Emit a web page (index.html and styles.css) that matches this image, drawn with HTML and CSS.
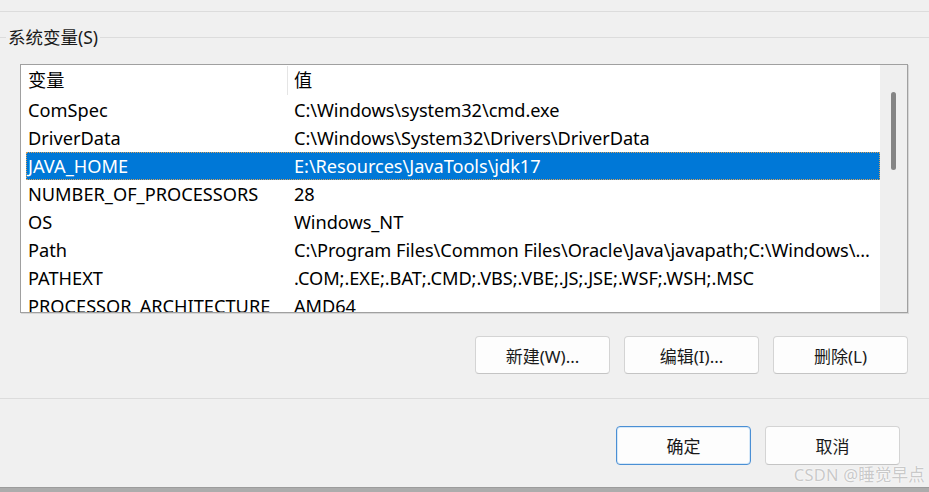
FILE: index.html
```html
<!DOCTYPE html>
<html lang="zh-CN">
<head>
    <meta charset="UTF-8">
    <title>环境变量</title>
    <link rel="stylesheet" href="styles.css">
</head>
<body>
<div class="window">
    <div class="top-strip"></div>
    <fieldset class="group">
        <legend>系统变量(S)</legend>
        <div class="group-body">
            <div class="list-box">
                <div class="list-view">
                    <div class="list-head">
                        <div class="col-name">变量</div>
                        <div class="col-value">值</div>
                    </div>
                    <div class="row"><div class="col-name">ComSpec</div><div class="col-value">C:\Windows\system32\cmd.exe</div></div>
                    <div class="row"><div class="col-name">DriverData</div><div class="col-value">C:\Windows\System32\Drivers\DriverData</div></div>
                    <div class="row selected"><div class="col-name">JAVA_HOME</div><div class="col-value">E:\Resources\JavaTools\jdk17</div></div>
                    <div class="row"><div class="col-name">NUMBER_OF_PROCESSORS</div><div class="col-value">28</div></div>
                    <div class="row"><div class="col-name">OS</div><div class="col-value">Windows_NT</div></div>
                    <div class="row"><div class="col-name">Path</div><div class="col-value">C:\Program Files\Common Files\Oracle\Java\javapath;C:\Windows\...</div></div>
                    <div class="row"><div class="col-name">PATHEXT</div><div class="col-value">.COM;.EXE;.BAT;.CMD;.VBS;.VBE;.JS;.JSE;.WSF;.WSH;.MSC</div></div>
                    <div class="row"><div class="col-name">PROCESSOR_ARCHITECTURE</div><div class="col-value">AMD64</div></div>
                </div>
                <div class="scrollbar">
                    <div class="thumb"></div>
                </div>
            </div>
            <div class="list-buttons">
                <button class="btn">新建(W)...</button>
                <button class="btn">编辑(I)...</button>
                <button class="btn">删除(L)</button>
            </div>
        </div>
    </fieldset>
    <div class="dialog-buttons">
        <button class="btn btn-default">确定</button>
        <button class="btn">取消</button>
    </div>
    <div class="watermark">CSDN @睡觉早点</div>
    <div class="bottom-bar"></div>
</div>
</body>
</html>
```

FILE: styles.css
```css
* {
    box-sizing: border-box;
}
body {
    margin: 0;
    background-color: #f0f0f0;
    font-family: "Noto Sans", "Noto Sans CJK SC", sans-serif;
    color: #000;
    overflow: hidden;
}
.window {
    position: relative;
    width: 929px;
    height: 492px;
    overflow: hidden;
}
.top-strip {
    height: 12px;
    border-bottom: 1px solid #dcdcdc;
}
.group {
    margin: 14px -2px 0 -2px;
    padding: 16px 0 24px 0;
    border: 1px solid #dcdcdc;
    min-width: 0;
}
.group legend {
    margin-left: 7px;
    padding: 0 2px;
    font-size: 17.5px;
    line-height: 22px;
    color: #1a1a1a;
}
.group-body {
    padding: 0 22px 0 21px;
}
.list-box {
    display: flex;
    height: 249px;
    border: 1px solid #a0a0a0;
    background-color: #fff;
    box-shadow: 1px 1px 0 #d6d6d6;
}
.list-view {
    flex: 1;
    overflow: hidden;
    font-size: 18.2px;
}
.list-head {
    display: flex;
    height: 31px;
    align-items: center;
    padding-left: 6px;
}
.list-head .col-name {
    width: 261px;
    height: 29px;
    line-height: 29px;
    padding-left: 1px;
    border-right: 1px solid #e5e5e5;
    white-space: nowrap;
}
.list-head .col-value {
    padding-left: 6px;
    line-height: 29px;
}
.row {
    display: flex;
    height: 28px;
    line-height: 28px;
    margin-left: 5px;
}
.row .col-name {
    width: 264px;
    padding-left: 2px;
    white-space: nowrap;
    overflow: hidden;
}
.row .col-value {
    flex: 1;
    padding-left: 4px;
    white-space: nowrap;
    overflow: hidden;
    letter-spacing: -0.05px;
}
.row.selected {
    background-color: #0078d7;
    color: #fff;
    outline: 1px dotted #d9a15a;
    outline-offset: -1px;
}
.scrollbar {
    width: 27px;
    background-color: #efefef;
    position: relative;
}
.thumb {
    position: absolute;
    left: 11px;
    top: 27px;
    width: 5px;
    height: 78px;
    border-radius: 3px;
    background-color: #858585;
}
.list-buttons {
    display: flex;
    justify-content: flex-end;
    gap: 14px;
    margin-top: 23px;
}
.btn {
    width: 135px;
    height: 38px;
    font-family: "Noto Sans", "Noto Sans CJK SC", sans-serif;
    font-size: 17px;
    color: #1a1a1a;
    background-color: #fdfdfd;
    border: 1px solid #d4d4d4;
    border-bottom-color: #c4c4c4;
    border-radius: 4px;
    padding: 0;
}
.btn-default {
    border: 1px solid #4a8fd4;
    box-shadow: inset 0 0 0 1px #d6e8f8;
}
.dialog-buttons {
    display: flex;
    justify-content: flex-end;
    gap: 14px;
    padding-right: 29px;
    margin-top: 27px;
}
.dialog-buttons .btn {
    height: 39px;
}
.watermark {
    position: absolute;
    right: 4px;
    bottom: 6px;
    font-size: 16.5px;
    color: #c9c9c9;
    text-shadow: 0 0 2px #fff, 0 0 1px #fff;
    letter-spacing: 0.2px;
}
.bottom-bar {
    position: absolute;
    left: 0;
    right: 0;
    bottom: 0;
    height: 5px;
    background-color: #acacac;
    border-top: 1px solid #9c9c9c;
}
```
